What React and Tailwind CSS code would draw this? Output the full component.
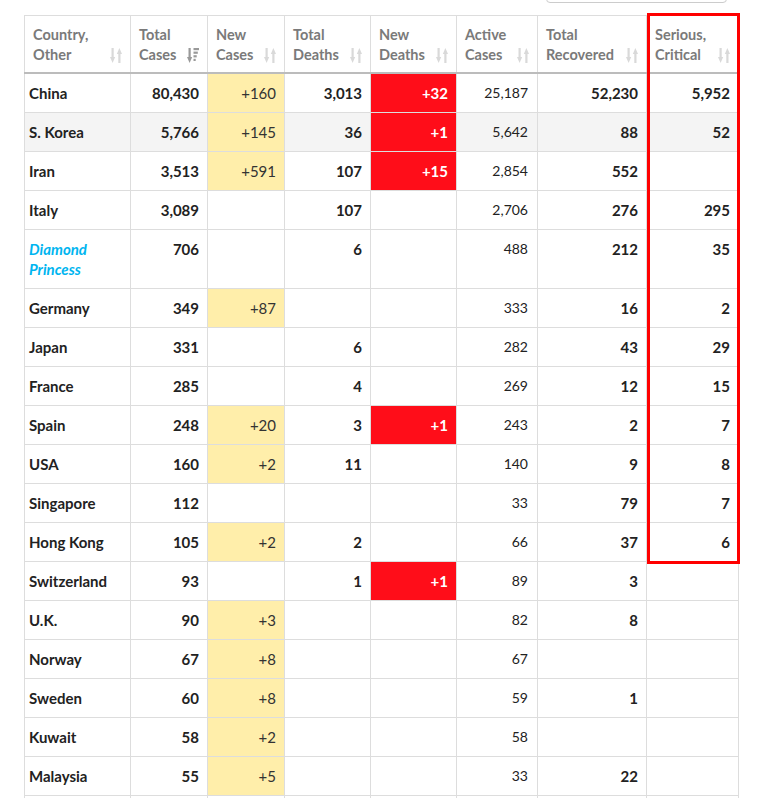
import React from 'react';

const rows = [
  ['China', '80,430', '+160', '3,013', '+32', '25,187', '52,230', '5,952'],
  ['S. Korea', '5,766', '+145', '36', '+1', '5,642', '88', '52'],
  ['Iran', '3,513', '+591', '107', '+15', '2,854', '552', ''],
  ['Italy', '3,089', '', '107', '', '2,706', '276', '295'],
  ['Diamond Princess', '706', '', '6', '', '488', '212', '35'],
  ['Germany', '349', '+87', '', '', '333', '16', '2'],
  ['Japan', '331', '', '6', '', '282', '43', '29'],
  ['France', '285', '', '4', '', '269', '12', '15'],
  ['Spain', '248', '+20', '3', '+1', '243', '2', '7'],
  ['USA', '160', '+2', '11', '', '140', '9', '8'],
  ['Singapore', '112', '', '', '', '33', '79', '7'],
  ['Hong Kong', '105', '+2', '2', '', '66', '37', '6'],
  ['Switzerland', '93', '', '1', '+1', '89', '3', ''],
  ['U.K.', '90', '+3', '', '', '82', '8', ''],
  ['Norway', '67', '+8', '', '', '67', '', ''],
  ['Sweden', '60', '+8', '', '', '59', '1', ''],
  ['Kuwait', '58', '+2', '', '', '58', '', ''],
  ['Malaysia', '55', '+5', '', '', '33', '22', ''],
  ['', '', '', '', '', '', '', ''],
];

const headers = [
  ['Country,', 'Other'],
  ['Total', 'Cases'],
  ['New', 'Cases'],
  ['Total', 'Deaths'],
  ['New', 'Deaths'],
  ['Active', 'Cases'],
  ['Total', 'Recovered'],
  ['Serious,', 'Critical'],
];

const widths = [106, 77, 77, 86, 86, 81, 109, 92];

function SortBoth() {
  return (
    <svg width="12" height="15" viewBox="0 0 12 15" className="shrink-0 mb-[2px]">
      <rect x="1.5" y="0" width="2.2" height="10" fill="#d9d9d9" />
      <polygon points="0,9 5.2,9 2.6,15" fill="#d9d9d9" />
      <polygon points="6.8,6 12,6 9.4,0" fill="#d9d9d9" />
      <rect x="8.3" y="5" width="2.2" height="10" fill="#d9d9d9" />
    </svg>
  );
}

function SortDesc() {
  return (
    <svg width="12" height="15" viewBox="0 0 12 15" className="shrink-0 mb-[2px]">
      <rect x="1.5" y="0" width="2.2" height="10" fill="#999" />
      <polygon points="0,9 5.2,9 2.6,15" fill="#999" />
      <rect x="6.5" y="0" width="5.5" height="2.2" fill="#999" />
      <rect x="6.5" y="3.6" width="4.3" height="2.2" fill="#999" />
      <rect x="6.5" y="7.2" width="3.2" height="2.2" fill="#999" />
      <rect x="6.5" y="10.8" width="2.2" height="2.2" fill="#999" />
    </svg>
  );
}

export default function App() {
  return (
    <div
      className="relative w-[761px] h-[798px] overflow-hidden bg-white text-[#222]"
      style={{ fontFamily: '"Segoe UI", Lato, "Noto Sans", sans-serif' }}
    >
      {/* search box peeking from the top */}
      <div className="ml-[546px] -mt-[27px] w-[181px] h-[30px] rounded border border-[#ccc] bg-white" />

      <table className="ml-[24px] mt-[12px] table-fixed border-collapse w-[715px]">
        <colgroup>
          {widths.map((w, i) => (
            <col key={i} style={{ width: w }} />
          ))}
        </colgroup>
        <thead>
          <tr>
            {headers.map((h, i) => (
              <th
                key={i}
                className="border border-[#ddd] border-b-2 border-b-[#bcbcbc] pt-[9px] pb-[7px] pl-[8px] pr-[8px] align-top text-left font-bold text-[14.5px] leading-[20px] text-[#7a7a7a]"
              >
                <div className="flex items-end justify-between">
                  <span>
                    {h[0]}
                    <br />
                    {h[1]}
                  </span>
                  {i === 1 ? <SortDesc /> : <SortBoth />}
                </div>
              </th>
            ))}
          </tr>
        </thead>
        <tbody>
          {rows.map((r, ri) => (
            <tr key={ri} className={ri === 1 ? 'bg-[#f4f4f4]' : 'bg-white'}>
              <td className="border border-[#ddd] align-top pt-[9px] pb-[9px] pl-[4px] pr-[4px] text-[15px] leading-[20px] font-bold">
                {r[0] === 'Diamond Princess' ? (
                  <span className="italic text-[#00b5f0]">
                    Diamond
                    <br />
                    Princess
                  </span>
                ) : (
                  r[0]
                )}
              </td>
              <td className="border border-[#ddd] align-top py-[9px] pr-[8px] text-right text-[15px] leading-[20px] font-bold">
                {r[1]}
              </td>
              <td
                className={
                  'border border-[#ddd] align-top py-[9px] pr-[8px] text-right text-[15px] leading-[20px] text-[#333] ' +
                  (r[2] ? 'bg-[#ffeeaa]' : '')
                }
              >
                {r[2]}
              </td>
              <td className="border border-[#ddd] align-top py-[9px] pr-[8px] text-right text-[15px] leading-[20px] font-bold">
                {r[3]}
              </td>
              <td
                className={
                  'border border-[#ddd] align-top py-[9px] pr-[8px] text-right text-[15px] leading-[20px] font-bold text-white ' +
                  (r[4] ? 'bg-[#ff0d19]' : '')
                }
              >
                {r[4]}
              </td>
              <td className="border border-[#ddd] align-top py-[9px] pr-[9px] text-right text-[14px] leading-[20px]">
                {r[5]}
              </td>
              <td className="border border-[#ddd] align-top py-[9px] pr-[8px] text-right text-[15px] leading-[20px] font-bold">
                {r[6]}
              </td>
              <td className="border border-[#ddd] align-top py-[9px] pr-[8px] text-right text-[15px] leading-[20px] font-bold">
                {r[7]}
              </td>
            </tr>
          ))}
        </tbody>
      </table>

      {/* highlight around the Serious, Critical column */}
      <div className="absolute left-[647px] top-[13px] w-[93px] h-[551px] border-[3px] border-[#ff0000] pointer-events-none" />
    </div>
  );
}
